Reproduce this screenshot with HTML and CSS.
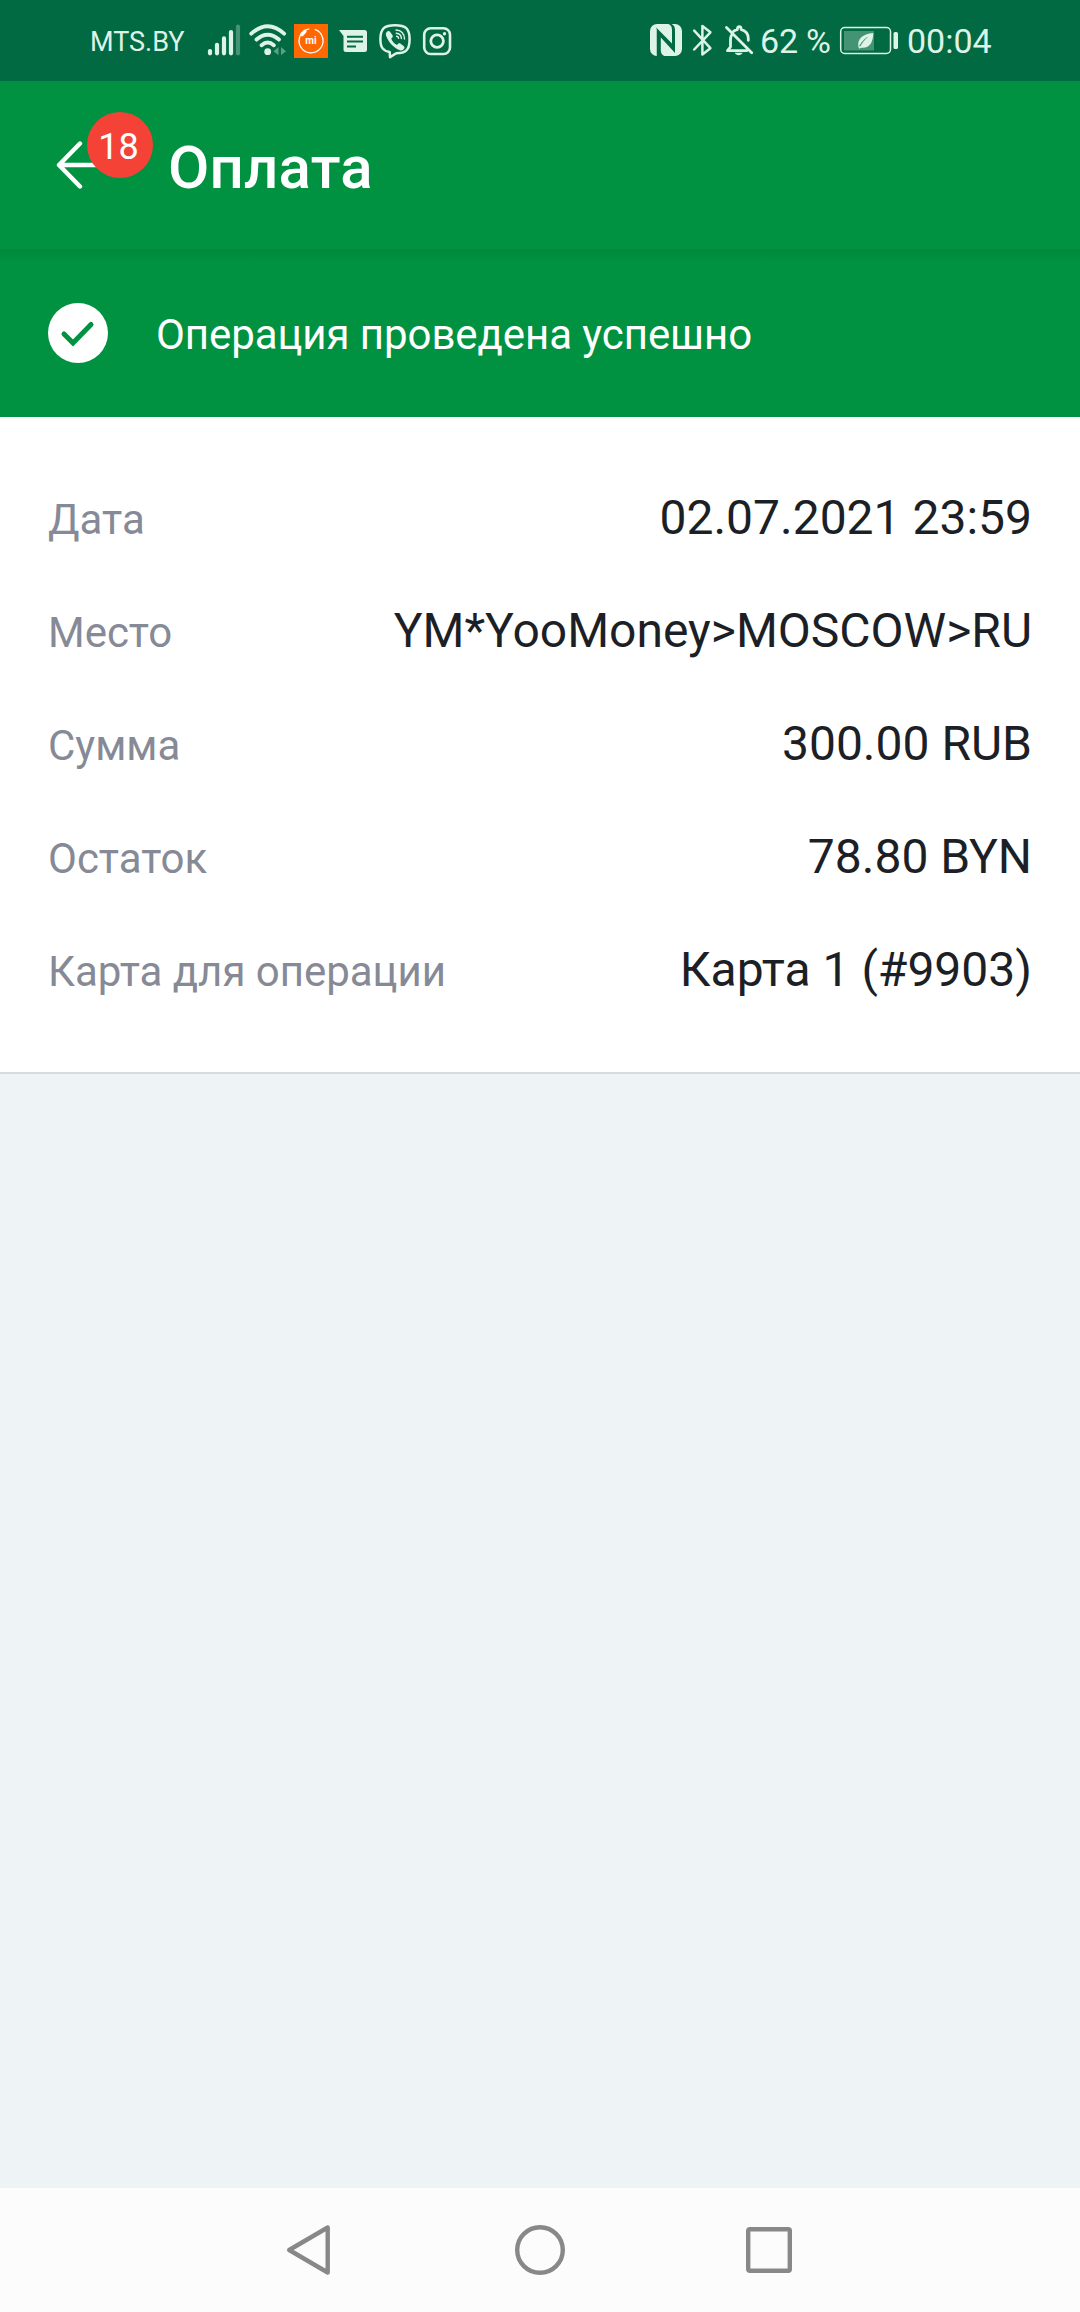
FILE: index.html
```html
<!DOCTYPE html>
<html lang="ru">
<head>
<meta charset="utf-8">
<title>Оплата</title>
<link rel="stylesheet" href="styles.css">
</head>
<body>
<div class="screen">
  <div class="status">
    <span class="carrier">MTS.BY</span>
    <svg class="ic signal" viewBox="206 20 36 40" width="36" height="40">
      <g stroke="currentColor" stroke-width="4.2" stroke-linecap="round"><path d="M210 51v2.3M217 44.8v8.5M224 38.4v14.9M231 32v21.3"/><path d="M238 26.7v26.6" opacity=".3"/></g>
    </svg>
    <svg class="ic wifi" viewBox="248 20 40 40" width="40" height="40">
      <g fill="none" stroke="currentColor" stroke-width="3.9" stroke-linecap="round"><path d="M251.3 33.6Q267.7 18.8 284.1 33.6M256.5 39.6Q267.7 30 278.9 39.6M261.6 45.2Q267.7 39.9 273.8 45.2"/></g>
      <circle cx="267.7" cy="51.7" r="3.4" fill="currentColor"/>
      <path d="M278.5 47v8.3l-5-4zM281 47v8.3l5-4z" fill="currentColor" opacity=".4"/>
    </svg>
    <svg class="ic mi" viewBox="294 20 34 40" width="34" height="40">
      <path fill="#ff6700" d="M294 24h34v34h-34z"/>
      <path d="M308.5 29.1A12 12 0 1 0 314 29.2" transform="rotate(4 311 41)" fill="none" stroke="#fff" stroke-width="1.3"/>
      <path d="M302 34.5l2.9-3.2" stroke="#fff" stroke-width="3.4" stroke-linecap="round"/>
      <text x="311" y="44" text-anchor="middle" class="mi-text">mi</text>
    </svg>
    <svg class="ic sms" viewBox="338 20 30 40" width="30" height="40">
      <path fill="currentColor" d="M339 30h25.5a2.5 2.5 0 0 1 2.5 2.5v17a2.5 2.5 0 0 1-2.5 2.5H346a2.5 2.5 0 0 1-2.5-2.5V36z"/>
      <path d="M347 36.8h16M347 41.5h16M347 46.5h9" stroke="#016a43" stroke-width="1.9"/>
    </svg>
    <svg class="ic viber" viewBox="378 20 34 40" width="34" height="40">
      <path fill="none" stroke="currentColor" stroke-width="2.5" stroke-linejoin="round" d="M395 25.2c10.5 0 14.6 3 14.6 14s-4.1 14-13.3 14l-6.300 3.900-.3-5c-7-1.300-9.300-5-9.300-12.900 0-11 4.100-14 14.600-14z"/>
      <path fill="currentColor" d="M386.500 32.300c1.300-1.700 2.600-1.800 3.700-.4l2.300 3.300c.7 1.200.2 2.100-1.300 3.300 1 3 2.800 5 5.800 6.500 1.200-1.700 2.300-2.100 3.600-1.300l3 2.200c1.500 1.200 1 2.400-.3 3.700-1.200 1.100-2.300 1.200-4 .4-6.300-2.900-10.300-7.600-12.900-13.600-.7-1.700-.8-2.900.1-4.100z"/>
      <path d="M396 30c5 0 8.500 3.500 8.500 9M396.300 33.300c3.200.2 5 2.200 5.100 5.200M396.600 36.300c1.200.1 1.900.8 2 2" fill="none" stroke="currentColor" stroke-width="1.400" stroke-linecap="round"/>
    </svg>
    <svg class="ic insta" viewBox="422 20 30 40" width="30" height="40">
      <rect x="424.200" y="28.200" width="25.800" height="25.800" rx="6.500" fill="none" stroke="currentColor" stroke-width="2.600"/>
      <circle cx="437.100" cy="41.100" r="6.300" fill="none" stroke="currentColor" stroke-width="2.800"/>
      <circle cx="444.500" cy="33.700" r="1.700" fill="currentColor"/>
    </svg>

    <svg class="ic nfc" viewBox="650 20 32 40" width="32" height="40">
      <rect x="650" y="24" width="32" height="32" rx="7" fill="currentColor"/>
      <path d="M656.200 56V27.500L672 43.500V30c0-3-1-5-3.500-6h3c2.500 1 3.500 3 3.500 6v23L660.800 37.500V50c0 3 1 5 3.500 6z" fill="#016a43"/>
      <path d="M656.200 56V28.500" stroke="currentColor" stroke-width="1"/>
    </svg>
    <svg class="ic bt" viewBox="691 20 22 40" width="22" height="40">
      <path d="M694.200 30.700l16.200 17.500-8 6.300V26l8 6.300-16.200 17.200" fill="none" stroke="currentColor" stroke-width="2.500" stroke-linejoin="round" stroke-linecap="round"/>
    </svg>
    <svg class="ic bell" viewBox="725 20 30 40" width="30" height="40">
      <g fill="none" stroke="currentColor" stroke-width="2.800" stroke-linecap="round" stroke-linejoin="round"><path d="M726.500 27.500l25.200 25.200M731.300 35.500c-.6 1.500-.8 3.200-.8 5v6.300l-3 3.800H747M733.800 31.200c1-.8 2.200-1.300 3.500-1.600.2-4.100 3.800-4.100 4 0 4.500 1.200 7 4.400 7 9v1.700"/></g>
      <path d="M734.700 52.800h8c-1.500 3.300-6.500 3.300-8 0z" fill="currentColor"/>
    </svg>
    <span class="percent">62 %</span>
    <svg class="ic batt" viewBox="839 20 60 40" width="60" height="40">
      <rect x="840.700" y="27.500" width="49.800" height="26" rx="4" fill="none" stroke="currentColor" stroke-width="1.500"/>
      <path fill="currentColor" opacity=".3" d="M844 31h30v19.500h-30z"/>
      <rect x="893.500" y="32" width="4.500" height="17" rx="1.600" fill="currentColor"/>
      <path fill="currentColor" d="M858.300 46.400c-1-7.500 4-12.200 15-13.400-.3 10.200-4.200 15.800-12.200 14.700l-1.900 1.100zM859 46c3.500-5.300 6.500-8 9.500-9.500-4 3.300-6.500 6.500-8.200 10z" fill-rule="evenodd"/>
    </svg>
    <span class="clock">00:04</span>
  </div>

  <header class="bar">
    <div class="back">
      <svg viewBox="54 138 48 54" width="48" height="54"><path d="M80 143.500L59 165 80 186.500M59 165H100" fill="none" stroke="#fff" stroke-width="4.400" stroke-linecap="round" stroke-linejoin="round"/></svg>
      <span class="badge">18</span>
    </div>
    <h1 class="title">Оплата</h1>
  </header>

  <section class="banner">
    <svg viewBox="0 0 60 60" width="60" height="60"><circle cx="30" cy="30" r="30" fill="#fff"/><path d="M16 31l9 9 18-18.500" fill="none" stroke="#009240" stroke-width="5" stroke-linecap="round"/></svg>
    <p class="message">Операция проведена успешно</p>
  </section>

  <dl class="details">
    <div class="row"><dt>Дата</dt><dd>02.07.2021 23:59</dd></div>
    <div class="row"><dt>Место</dt><dd>YM*YooMoney&gt;MOSCOW&gt;RU</dd></div>
    <div class="row"><dt>Сумма</dt><dd>300.00 RUB</dd></div>
    <div class="row"><dt>Остаток</dt><dd>78.80 BYN</dd></div>
    <div class="row"><dt>Карта для операции</dt><dd>Карта 1 (#9903)</dd></div>
  </dl>

  <nav class="nav">
    <svg viewBox="0 0 54 54" width="54" height="54"><path d="M43.700 4.500v45L5.200 27z"/></svg>
    <svg viewBox="0 0 54 54" width="54" height="54"><circle cx="27" cy="27" r="22.800"/></svg>
    <svg viewBox="0 0 54 54" width="54" height="54"><rect x="6.200" y="6.200" width="41.600" height="41.600" rx="1.500"/></svg>
  </nav>
</div>
</body>
</html>
```
FILE: styles.css
```css
* { box-sizing: border-box; }
body { margin: 0; font-family: Roboto, "Noto Sans", sans-serif; background: #eef3f6; }
.screen { display: flex; flex-direction: column; width: 1080px; height: 2312px; }
svg { display: block; flex: none; }

.status { display: flex; flex: none; height: 81px; padding: 20px 0 0 90px; background: #016a43; color: #def3e8; white-space: nowrap; }
.carrier { width: 116px; font-size: 27px; line-height: 45px; }
.wifi { margin-left: 6px; }
.mi { margin-left: 6px; }
.mi-text { font: 700 10px Roboto, sans-serif; fill: #fff; }
.sms { margin-left: 10px; }
.viber { margin-left: 10px; }
.insta { margin-left: 10px; }
.nfc { margin-left: 198px; }
.bt { margin-left: 9px; }
.bell { margin-left: 12px; }
.percent { width: 79px; margin-left: 5px; font-size: 34px; line-height: 43px; letter-spacing: -0.2px; }
.clock { margin-left: 8px; font-size: 34px; line-height: 43px; }

.bar { display: flex; flex: none; align-items: center; height: 168px; padding-left: 54px; background: #009240; }
.back { position: relative; width: 114px; }
.badge { position: absolute; left: 33px; top: -26px; width: 66px; height: 66px; border-radius: 50%; background: #f44336; color: #fff; font-size: 36px; line-height: 70px; text-align: center; text-indent: -3px; }
.title { margin: 0; padding-top: 5px; color: #fff; font-size: 60px; font-weight: 500; line-height: 72px; letter-spacing: 0.2px; }

.banner { display: flex; flex: none; align-items: center; gap: 48px; height: 168px; padding-left: 48px; background: linear-gradient(#00873b, #009240 12px); color: #fff; }
.message { margin: 0; padding-top: 3px; font-size: 42px; line-height: 50px; letter-spacing: -0.07px; }

.details { flex: none; height: 657px; margin: 0; padding: 44px 48px 0; border-bottom: 2px solid #d7dce1; background: #fff; }
.row { display: flex; align-items: baseline; justify-content: space-between; height: 113px; line-height: 113px; }
.row dt { color: #868a96; font-size: 42px; letter-spacing: -0.02px; }
.row dd { margin: 0; color: #1d1f26; font-size: 48px; }

.nav { display: flex; align-items: center; justify-content: center; gap: 175px; height: 124px; margin-top: auto; background: #fcfcfc; }
.nav svg { fill: none; stroke: #888; stroke-width: 4.4px; stroke-linejoin: round; }
```
